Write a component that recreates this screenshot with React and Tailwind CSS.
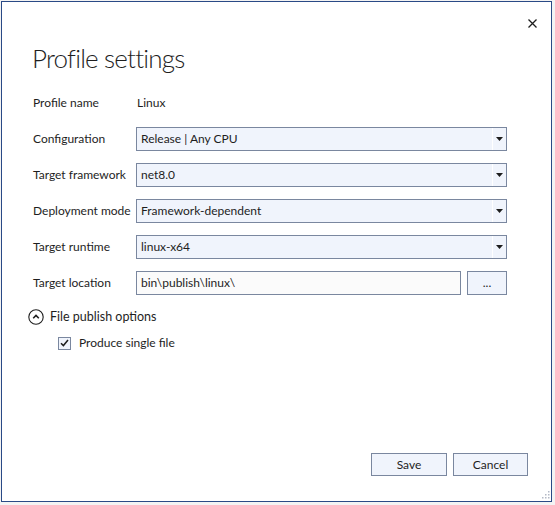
import React from "react";

const font = { fontFamily: 'Lato, "Noto Sans", sans-serif' };

function Arrow() {
  return (
    <svg width="7" height="4" viewBox="0 0 7 4" className="block">
      <path d="M0 0H7L3.5 4Z" fill="#1e1e1e" />
    </svg>
  );
}

function Select({ value }) {
  return (
    <div className="flex-1 h-[24px] flex items-stretch border border-[#7a879f] bg-[#f0f4fc]">
      <div className="flex-1 flex items-center pl-[4px] text-[12px] text-[#1e1e1e]">{value}</div>
      <div className="w-[1px] bg-white" />
      <div className="w-[13px] flex items-center justify-center">
        <Arrow />
      </div>
    </div>
  );
}

function Row({ label, children }) {
  return (
    <div className="flex items-center h-[24px]">
      <div className="w-[103px] shrink-0 text-[12px] text-[#1e1e1e] whitespace-nowrap">{label}</div>
      <div className="flex-1 flex items-center h-full">{children}</div>
    </div>
  );
}

export default function App() {
  return (
    <div className="w-[555px] h-[505px] bg-[#f3f3f3] overflow-hidden" style={font}>
      <div className="ml-[1px] mt-[1px] w-[551px] h-[501px] border border-[#2a4a86] bg-white flex flex-col relative">
        <svg width="9" height="9" viewBox="0 0 9 9" className="absolute left-[526px] top-[17px]">
          <path d="M0.5 0.5L8.5 8.5M8.5 0.5L0.5 8.5" stroke="#1e1e1e" strokeWidth="1.3" />
        </svg>
        <div className="pl-[30px] pt-[38px] h-[89px] text-[26px] font-light tracking-[-0.8px] text-[#1e1e1e] leading-[36px]">
          Profile settings
        </div>
        <div className="pl-[31px] pr-[44px] flex flex-col gap-[12px]">
          <Row label="Profile name">
            <div className="pl-[1px] text-[12px] text-[#1e1e1e]">Linux</div>
          </Row>
          <Row label="Configuration">
            <Select value="Release | Any CPU" />
          </Row>
          <Row label="Target framework">
            <Select value="net8.0" />
          </Row>
          <Row label="Deployment mode">
            <Select value="Framework-dependent" />
          </Row>
          <Row label="Target runtime">
            <Select value="linux-x64" />
          </Row>
          <Row label="Target location">
            <div className="flex-1 h-[24px] flex items-center pl-[4px] border border-[#7a879f] bg-[#fbfbfb] text-[12px] text-[#1e1e1e]">
              bin\publish\linux\
            </div>
            <div className="ml-[6px] w-[40px] h-[24px] border border-[#7a879f] bg-[#f0f4fc] flex items-center justify-center text-[12px] text-[#1e1e1e]">
              ...
            </div>
          </Row>
        </div>
        <div className="pl-[26px] mt-[13px] flex items-center h-[18px]">
          <svg width="16" height="16" viewBox="0 0 16 16">
            <circle cx="8" cy="8" r="7.2" fill="none" stroke="#1e1e1e" strokeWidth="1.1" />
            <path d="M5.2 9.3L8 6.5L10.8 9.3" fill="none" stroke="#1e1e1e" strokeWidth="1.6" />
          </svg>
          <span className="ml-[6px] text-[12.5px] text-[#1e1e1e]">File publish options</span>
        </div>
        <div className="pl-[56px] mt-[8px] flex items-center h-[18px]">
          <div className="w-[13px] h-[13px] border border-[#7a879f] bg-[#f0f4fc] flex items-center justify-center">
            <svg width="9" height="8" viewBox="0 0 9 8">
              <path d="M1 4.2L3.4 6.6L8 1" fill="none" stroke="#1e1e1e" strokeWidth="1.5" />
            </svg>
          </div>
          <span className="ml-[8px] text-[12px] text-[#1e1e1e]">Produce single file</span>
        </div>
        <div className="flex-1" />
        <div className="flex justify-end gap-[6px] pr-[23px] pb-[25px]">
          <div className="w-[76px] h-[23px] border border-[#7a879f] bg-[#f0f4fc] flex items-center justify-center text-[12px] text-[#1e1e1e]">
            Save
          </div>
          <div className="w-[75px] h-[23px] border border-[#7a879f] bg-[#f0f4fc] flex items-center justify-center text-[12px] text-[#1e1e1e]">
            Cancel
          </div>
        </div>
        <svg width="10" height="10" viewBox="0 0 10 10" className="absolute right-[1px] bottom-[1px]">
          {[[8, 0], [8, 3], [5, 3], [8, 6], [5, 6], [2, 6]].map(([x, y], i) => (
            <rect key={i} x={x} y={y + 1} width="1.5" height="1.5" fill="#b4b9c6" />
          ))}
        </svg>
      </div>
    </div>
  );
}
